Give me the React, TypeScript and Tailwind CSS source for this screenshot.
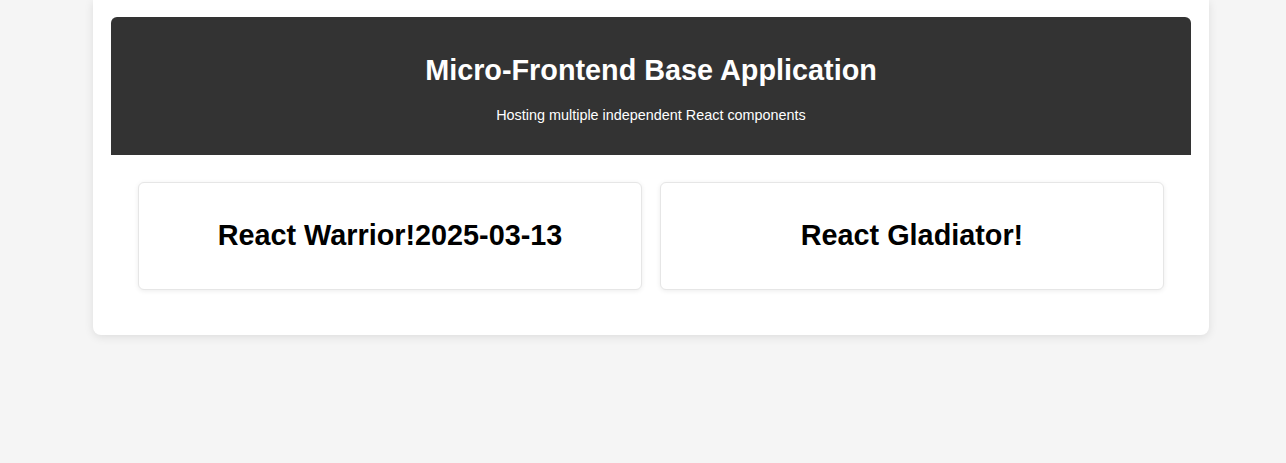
export default function App() {
  return (
    <div className="min-h-[463px] bg-[#f5f5f5] font-['Liberation_Sans',Arial,sans-serif]">
      <div className="ml-[93px] w-[1116px] rounded-b-lg bg-white px-[18px] pt-[17px] pb-[18px] shadow-[0_2px_10px_rgba(0,0,0,0.1)]">
        <header className="rounded-t-md bg-[#333333] pt-[37px] pb-[32px] text-center text-white">
          <h1 className="text-[28.8px] font-bold leading-[32px]">Micro-Frontend Base Application</h1>
          <p className="mt-[21px] text-[14.4px] leading-[16px]">Hosting multiple independent React components</p>
        </header>
        <main className="grid grid-cols-2 gap-[18px] p-[27px]">
          <div className="rounded-md border border-[#e6e6e6] bg-white pt-[36px] pb-[38px] text-center shadow-[0_1px_5px_rgba(0,0,0,0.08)]">
            <h2 className="text-[28.8px] font-bold leading-[32px] text-black">React Warrior!2025-03-13</h2>
          </div>
          <div className="rounded-md border border-[#e6e6e6] bg-white pt-[36px] pb-[38px] text-center shadow-[0_1px_5px_rgba(0,0,0,0.08)]">
            <h2 className="text-[28.8px] font-bold leading-[32px] text-black">React Gladiator!</h2>
          </div>
        </main>
      </div>
    </div>
  )
}
